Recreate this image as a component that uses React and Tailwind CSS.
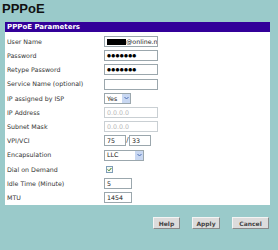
import React from 'react';

const label = "font-['DejaVu_Sans',sans-serif] text-[6.3px] text-[#333]";

const Box = ({ w, children, disabled, className = '' }) => (
  <div
    className={`h-[11px] ${w} border flex items-center px-[2px] overflow-hidden whitespace-nowrap text-[6.3px] font-['DejaVu_Sans',sans-serif] ${
      disabled ? 'border-[#c9cfd3] text-[#b8b8b8]' : 'border-[#9ba7ad] text-[#222]'
    } bg-white ${className}`}
  >
    {children}
  </div>
);

const Dots = () => (
  <span className="tracking-[0.3px] text-[4.5px] text-black leading-none">●●●●●●●</span>
);

const Select = ({ w, value }) => (
  <div className={`h-[11px] ${w} border border-[#9ba7ad] bg-white flex items-stretch`}>
    <div className="flex-1 flex items-center px-[2px] text-[6.3px] text-[#222] font-['DejaVu_Sans',sans-serif]">{value}</div>
    <div className="w-[8px] bg-[#c9d8f2] flex items-center justify-center">
      <svg width="5" height="4" viewBox="0 0 5 4">
        <path d="M0.5 1 L2.5 3 L4.5 1" fill="none" stroke="#4d6fb5" strokeWidth="1" />
      </svg>
    </div>
  </div>
);

const Btn = ({ w, children }) => (
  <div
    className={`h-[12px] ${w} bg-[#dcdcdc] border border-[#f4f4f4] border-r-[#8a8a8a] border-b-[#8a8a8a] flex items-center justify-center text-[6px] font-bold text-[#444] font-['DejaVu_Sans',sans-serif]`}
  >
    {children}
  </div>
);

const rows = [
  ['User Name', (
    <Box w="w-[54px]">
      <span className="inline-block w-[19px] h-[6px] bg-black shrink-0" />
      <span>@online.n</span>
    </Box>
  )],
  ['Password', <Box w="w-[54px]"><Dots /></Box>],
  ['Retype Password', <Box w="w-[54px]"><Dots /></Box>],
  ['Service Name (optional)', <Box w="w-[54px]" />],
  ['IP assigned by ISP', <Select w="w-[27px]" value="Yes" />],
  ['IP Address', <Box w="w-[54px]" disabled>0.0.0.0</Box>],
  ['Subnet Mask', <Box w="w-[54px]" disabled>0.0.0.0</Box>],
  ['VPI/VCI', (
    <div className="flex items-center">
      <Box w="w-[22px]">75</Box>
      <span className="text-[7px] text-[#333] w-[3px] text-center leading-none font-['DejaVu_Sans',sans-serif]">/</span>
      <Box w="w-[22px]">33</Box>
    </div>
  )],
  ['Encapsulation', <Select w="w-[40px]" value="LLC" />],
  ['Dial on Demand', (
    <div className="ml-[2px] w-[7px] h-[7px] border border-[#7f9db9] bg-[#f4f8f0] flex items-center justify-center">
      <svg width="5" height="5" viewBox="0 0 5 5">
        <path d="M0.6 2.4 L2 3.8 L4.4 1" fill="none" stroke="#3a7a1a" strokeWidth="1" />
      </svg>
    </div>
  )],
  ['Idle Time (Minute)', <Box w="w-[28px]">5</Box>],
  ['MTU', <Box w="w-[28px]">1454</Box>],
];

export default function App() {
  return (
    <div className="w-[278px] h-[250px] bg-[#9acaca] overflow-hidden">
      <div className="pt-[1.5px] pl-[2px] h-[22px] text-[13px] leading-[13px] font-bold text-[#111] font-['Liberation_Sans',Arial,sans-serif]">
        PPPoE
      </div>
      <div className="ml-[5px] w-[265px] h-[183px] bg-white overflow-hidden">
        <div className="h-[10px] bg-[#330099] pl-[2px] flex items-center text-[7px] font-bold text-white font-['DejaVu_Sans',sans-serif]">
          PPPoE Parameters
        </div>
        <div className="pt-[2.5px] pl-[2px]">
          {rows.map(([name, ctrl]) => (
            <div key={name} className="h-[14.2px] grid grid-cols-[97px_1fr] items-center">
              <div className={label}>{name}</div>
              <div className="flex items-center">{ctrl}</div>
            </div>
          ))}
        </div>
      </div>
      <div className="mt-[12px] w-[269px] flex justify-end gap-[12px]">
        <Btn w="w-[27px]">Help</Btn>
        <Btn w="w-[28px]">Apply</Btn>
        <Btn w="w-[37px]">Cancel</Btn>
      </div>
    </div>
  );
}
